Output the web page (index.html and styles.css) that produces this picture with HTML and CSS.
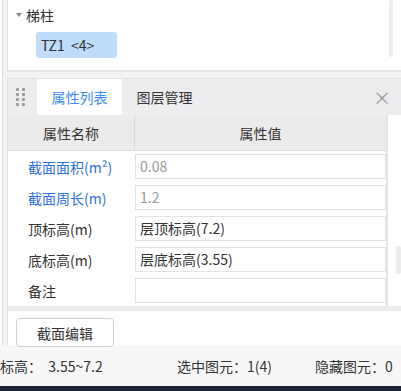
FILE: index.html
```
<!DOCTYPE html>
<html lang="zh">
<head>
    <meta charset="UTF-8">
    <title>属性列表</title>
    <link rel="stylesheet" href="styles.css">
</head>
<body>
    <div class="frame">
        <div class="tree-panel">
            <div class="tree-node">
                <span class="caret"></span>
                <span class="node-label">梯柱</span>
            </div>
            <div class="tree-leaf">TZ1&nbsp;&nbsp;&lt;4&gt;</div>
            <div class="tree-scroll"></div>
        </div>

        <div class="prop-panel">
            <div class="tab-bar">
                <div class="grip">
                    <i></i><i></i><i></i><i></i><i></i><i></i><i></i><i></i>
                </div>
                <div class="tab active">属性列表</div>
                <div class="tab">图层管理</div>
                <div class="close">×</div>
            </div>

            <div class="table-wrap">
                <div class="prop-table">
                    <div class="head">
                        <div class="hcell">属性名称</div>
                        <div class="hcell">属性值</div>
                    </div>
                    <div class="row">
                        <div class="name blue">截面面积(m²)</div>
                        <div class="value muted">0.08</div>
                    </div>
                    <div class="row">
                        <div class="name blue">截面周长(m)</div>
                        <div class="value muted">1.2</div>
                    </div>
                    <div class="row">
                        <div class="name">顶标高(m)</div>
                        <div class="value">层顶标高(7.2)</div>
                    </div>
                    <div class="row">
                        <div class="name">底标高(m)</div>
                        <div class="value">层底标高(3.55)</div>
                    </div>
                    <div class="row">
                        <div class="name">备注</div>
                        <div class="value"></div>
                    </div>
                </div>
                <div class="table-scroll"></div>
            </div>

            <div class="actions">
                <button class="btn">截面编辑</button>
            </div>
        </div>
    </div>

    <div class="status-bar">
        <span class="st-elev">标高：&nbsp;&nbsp;3.55~7.2</span>
        <span class="st-sel">选中图元：1(4)</span>
        <span class="st-hide">隐藏图元：0</span>
    </div>
    <div class="taskbar"></div>
</body>
</html>
```

FILE: styles.css
```
body, html {
    margin: 0;
    padding: 0;
    width: 401px;
    height: 391px;
    overflow: hidden;
    background-color: #fff;
    font-family: "Noto Sans CJK SC", "Microsoft YaHei", sans-serif;
    font-size: 14px;
    color: #333;
}

.frame {
    height: 345px;
    border-left: 1px solid #dcdcdc;
    margin-left: 2px;
    padding-left: 4px;
    background-color: #f3f3f3;
    box-sizing: border-box;
}

/* tree */
.tree-panel {
    position: relative;
    height: 72px;
    background-color: #fff;
    border-left: 1px solid #e0e0e0;
    border-bottom: 2px solid #e4e4e4;
    box-sizing: border-box;
    padding-top: 4px;
}

.tree-node {
    display: flex;
    align-items: center;
    height: 22px;
    padding-left: 8px;
}

.caret {
    width: 0;
    height: 0;
    border-left: 3px solid transparent;
    border-right: 3px solid transparent;
    border-top: 4px solid #888;
    margin-right: 4px;
}

.node-label {
    font-size: 14px;
    color: #333;
}

.tree-leaf {
    display: inline-block;
    margin: 6px 0 0 28px;
    padding: 0 0 0 5px;
    height: 26px;
    line-height: 26px;
    background-color: #bfdcfb;
    border-radius: 3px;
    font-size: 14px;
    color: #333;
    width: 81px;
    box-sizing: border-box;
    white-space: nowrap;
}

.tree-scroll {
    position: absolute;
    right: 8px;
    top: 0;
    width: 4px;
    height: 57px;
    background-color: #ececec;
    border-radius: 2px;
}

/* property panel */
.prop-panel {
    margin-top: 6px;
    background-color: #fff;
    border-left: 1px solid #e0e0e0;
    height: 267px;
}

.tab-bar {
    display: flex;
    align-items: stretch;
    height: 37px;
    background-color: #ededf0;
    border-top: 1px solid #e0e0e0;
    box-sizing: border-box;
}

.grip {
    display: grid;
    grid-template-columns: 3px 3px;
    grid-auto-rows: 3px;
    column-gap: 3px;
    row-gap: 2px;
    align-content: center;
    padding-left: 8px;
    width: 29px;
    box-sizing: border-box;
}

.grip i {
    display: block;
    background-color: #999;
    border-radius: 1px;
}

.tab {
    width: 85px;
    text-align: center;
    line-height: 36px;
    font-size: 14px;
    color: #333;
}

.tab.active {
    background-color: #fff;
    color: #3b8cf0;
}

.close {
    margin-left: auto;
    margin-right: 10px;
    line-height: 36px;
    font-size: 18px;
    color: #999;
}

.table-wrap {
    position: relative;
    padding-right: 13px;
    border-bottom: 5px solid #ececec;
}

.prop-table {
    border-right: 2px solid #e4e4e4;
}

.head {
    display: flex;
    height: 35px;
    background-color: #ebebeb;
    border-bottom: 1px solid #dcdcdc;
}

.hcell {
    line-height: 36px;
    text-align: center;
    font-size: 14px;
    color: #333;
}

.hcell:first-child {
    width: 126px;
    border-right: 1px solid #d8d8d8;
}

.hcell:last-child {
    flex: 1;
}

.row {
    display: flex;
    align-items: center;
    height: 31px;
}

.name {
    width: 127px;
    padding-left: 20px;
    box-sizing: border-box;
    font-size: 14px;
    color: #333;
}

.name.blue {
    color: #2f6fe0;
}

.value {
    flex: 1;
    height: 25px;
    line-height: 23px;
    border: 1px solid #e2e2e2;
    box-sizing: border-box;
    padding-left: 4px;
    font-size: 14px;
    color: #333;
}

.value.muted {
    color: #999;
}

.table-scroll {
    position: absolute;
    right: 0;
    top: 131px;
    width: 5px;
    height: 28px;
    background-color: #ececec;
    border-radius: 3px;
}

.actions {
    padding: 7px 0 0 8px;
}

.btn {
    width: 98px;
    height: 29px;
    background-color: #fff;
    border: 1px solid #cfcfcf;
    border-radius: 4px;
    font-family: inherit;
    font-size: 14px;
    color: #333;
    padding: 0;
}

.status-bar {
    display: flex;
    align-items: center;
    height: 41px;
    background-color: #f7f7f8;
    font-size: 14px;
    color: #333;
}

.st-elev {
    width: 177px;
}

.st-sel {
    width: 138px;
}

.taskbar {
    height: 5px;
    background-color: #1b2233;
}
```
